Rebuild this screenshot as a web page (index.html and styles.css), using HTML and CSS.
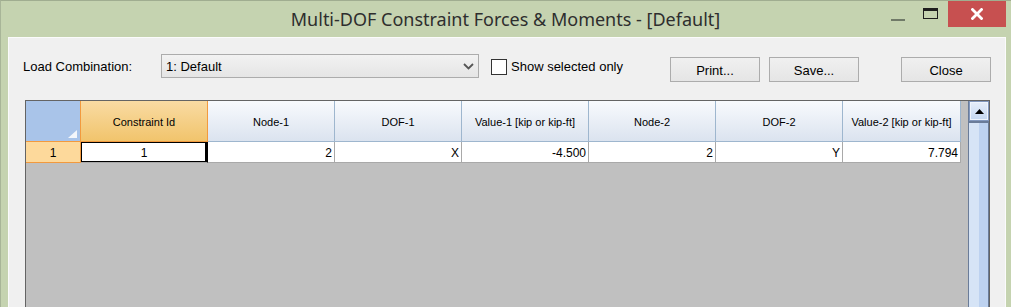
FILE: index.html
```html
<!DOCTYPE html>
<html lang="en">
<head>
    <meta charset="UTF-8">
    <title>Multi-DOF Constraint Forces &amp; Moments</title>
    <link rel="stylesheet" href="styles.css">
</head>
<body>
    <div class="window">
        <div class="titlebar">
            <div class="title">Multi-DOF Constraint Forces &amp; Moments - [Default]</div>
            <div class="caption-buttons">
                <div class="cap-btn"><span class="min-icon"></span></div>
                <div class="cap-btn"><span class="max-icon"></span></div>
                <div class="cap-btn close-btn">
                    <svg width="12" height="12" viewBox="0 0 12 12">
                        <path d="M1.5 1.5 L10.5 10.5 M10.5 1.5 L1.5 10.5" stroke="#fff" stroke-width="2.8" stroke-linecap="square"/>
                    </svg>
                </div>
            </div>
        </div>

        <div class="client">
            <div class="toolbar">
                <label class="combo-label">Load Combination:</label>
                <div class="combo">
                    <span>1: Default</span>
                    <svg width="11" height="7" viewBox="0 0 11 7">
                        <path d="M1 1 L5.5 5.5 L10 1" stroke="#555" stroke-width="1.8" fill="none"/>
                    </svg>
                </div>
                <div class="check">
                    <span class="check-box"></span>
                    <span>Show selected only</span>
                </div>
                <div class="buttons">
                    <button>Print...</button>
                    <button>Save...</button>
                    <button class="close-button">Close</button>
                </div>
            </div>

            <div class="grid">
                <div class="grid-table">
                    <div class="cell head corner"><span class="corner-mark"></span></div>
                    <div class="cell head head-active">Constraint Id</div>
                    <div class="cell head">Node-1</div>
                    <div class="cell head">DOF-1</div>
                    <div class="cell head">Value-1 [kip or kip-ft]</div>
                    <div class="cell head">Node-2</div>
                    <div class="cell head">DOF-2</div>
                    <div class="cell head">Value-2 [kip or kip-ft]</div>

                    <div class="cell row-head">1</div>
                    <div class="cell current">1</div>
                    <div class="cell num">2</div>
                    <div class="cell num">X</div>
                    <div class="cell num">-4.500</div>
                    <div class="cell num">2</div>
                    <div class="cell num">Y</div>
                    <div class="cell num">7.794</div>
                </div>
                <div class="scrollbar">
                    <div class="sb-up">
                        <svg width="9" height="5" viewBox="0 0 9 5"><path d="M0 5 L4.5 0 L9 5 Z" fill="#000"/></svg>
                    </div>
                    <div class="sb-thumb"></div>
                </div>
            </div>
        </div>
    </div>
</body>
</html>
```

FILE: styles.css
```css
* {
    margin: 0;
    padding: 0;
    box-sizing: border-box;
}

body {
    background: #c5d3b0;
    overflow: hidden;
    font-family: 'Liberation Sans', Arial, sans-serif;
    color: #000;
}

.window {
    position: relative;
    height: 360px;
    display: flex;
    flex-direction: column;
    border-top: 1px solid #a0ad90;
    border-left: 1px solid #a8b598;
}

/* Title bar */
.titlebar {
    height: 36px;
    display: flex;
    justify-content: center;
    align-items: center;
}

.title {
    font-family: 'Noto Sans', 'Open Sans', sans-serif;
    font-size: 18px;
    color: #2e2e2e;
    padding-bottom: 1px;
    margin-right: 1px;
}

.caption-buttons {
    position: absolute;
    top: 0;
    right: 5px;
    display: flex;
}

.cap-btn {
    width: 33px;
    height: 26px;
    display: flex;
    justify-content: center;
    align-items: center;
}

.min-icon {
    width: 14px;
    height: 2px;
    margin-top: 12px;
    background: #707a68;
}

.max-icon {
    width: 15px;
    height: 11px;
    margin-top: -1px;
    border: 1px solid #1e1e1e;
    border-top-width: 3px;
}

.close-btn {
    width: 58px;
    background: #c75050;
    margin-left: 1px;
}

/* Client area */
.client {
    flex: 1;
    margin: 0 5px 0 7px;
    background: #f0f0f0;
    border: 1px solid #fbfbfb;
    border-bottom: none;
    display: flex;
    flex-direction: column;
}

.toolbar {
    display: flex;
    align-items: flex-start;
    padding: 16px 14px 0 14px;
    font-size: 13px;
}

.combo-label {
    width: 138px;
    line-height: 24px;
    padding-top: 1px;
}

.combo {
    width: 318px;
    height: 24px;
    border: 1px solid #acacac;
    background: linear-gradient(#f2f2f2, #e5e5e5);
    display: flex;
    align-items: center;
    justify-content: space-between;
    padding: 1px 4px 0 4px;
}

.check {
    display: flex;
    align-items: center;
    gap: 4px;
    margin-left: 12px;
    height: 24px;
    padding-top: 1px;
}

.check-box {
    width: 16px;
    height: 16px;
    background: #fff;
    border: 1px solid #333;
}

.buttons {
    margin-left: auto;
    margin-top: 3px;
    display: flex;
    gap: 9px;
}

.buttons button {
    width: 90px;
    height: 25px;
    border: 1px solid #acacac;
    background: linear-gradient(#f0f0f0, #e5e5e5);
    font-family: 'Liberation Sans', Arial, sans-serif;
    font-size: 13px;
    color: #000;
    padding-top: 1px;
}

.buttons .close-button {
    margin-left: 33px;
}

/* Grid */
.grid {
    flex: 1;
    margin: 18px 15px 0 16px;
    border: 1px solid #646464;
    display: flex;
}

.grid-table {
    flex: 1;
    background: #c0c0c0;
    display: grid;
    grid-template-columns: 55px repeat(6, 127px) 118px;
    grid-template-rows: 41px 21px;
    align-content: start;
    font-size: 11px;
}

.cell {
    border-right: 1px solid #a9a9a9;
    border-bottom: 1px solid #a9a9a9;
    background: #fff;
    display: flex;
    align-items: center;
    padding: 1px 2px 0 2px;
}

.cell.head {
    justify-content: center;
    background: linear-gradient(#f8fafd, #dbe3ef);
    border-color: #9eb6ce;
}

.cell.head-active {
    background: linear-gradient(#f9dba3, #f1c46c);
    border-color: #f29a3e;
}

.cell.corner {
    position: relative;
    background: #a9c4e9;
    border-color: #f29a3e;
}

.corner-mark {
    position: absolute;
    right: 3px;
    bottom: 3px;
    width: 9px;
    height: 8px;
    background: #f4f7fb;
    clip-path: polygon(100% 0, 100% 100%, 0 100%);
}

.cell.row-head {
    justify-content: center;
    background: #fdd99b;
    border-color: #f29a3e;
    font-size: 12px;
}

.cell.current {
    justify-content: center;
    font-size: 12px;
    box-shadow: inset 0 0 0 1px #000, inset -2px 0 0 #000;
    border-right-color: #000;
    border-bottom-color: #a9a9a9;
}

.cell.num {
    justify-content: flex-end;
    font-size: 12px;
}

.scrollbar {
    width: 21px;
    display: flex;
    flex-direction: column;
    background: #6a7c99;
}

.sb-up {
    height: 20px;
    margin: 0 0 1px 1px;
    border: 1px solid #8197bd;
    background: linear-gradient(#e6eefa, #c4d7f1);
    display: flex;
    justify-content: center;
    align-items: center;
    box-shadow: inset 0 0 0 1px #eef4fc;
}

.sb-thumb {
    flex: 1;
    margin: 1px 1px 0 1px;
    background: linear-gradient(to right, #d6e4f6 0, #d6e4f6 50%, #bdd2f0 50%, #bdd2f0 100%);
}
```
